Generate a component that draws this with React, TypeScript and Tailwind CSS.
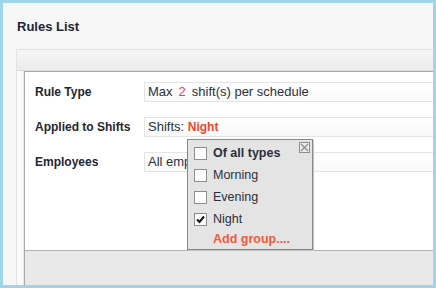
import React from 'react';

const shifts = [
  { label: 'Of all types', bold: true, checked: false },
  { label: 'Morning', bold: false, checked: false },
  { label: 'Evening', bold: false, checked: false },
  { label: 'Night', bold: false, checked: true },
];

const Field = ({ label, children }: { label: string; children: React.ReactNode }) => (
  <div className="flex items-center h-[20px] mb-[15px]">
    <div className="w-[109px] text-[12px] font-bold text-[#1f2633] leading-none">{label}</div>
    <div className="flex-1 h-[20px] flex items-center pl-[3px] border border-r-0 border-[#e4e4e4] bg-gradient-to-b from-white to-[#f9f9f9] text-[13px] text-[#2b303b] whitespace-nowrap overflow-hidden">
      {children}
    </div>
  </div>
);

const Checkbox = ({ checked }: { checked: boolean }) => (
  <div className="w-[13px] h-[13px] shrink-0 border border-[#8d8d8d] bg-white flex items-center justify-center">
    {checked && (
      <svg width="9" height="9" viewBox="0 0 9 9">
        <path d="M1 4.5 L3.5 7 L8 1.5" fill="none" stroke="#111" strokeWidth="2" />
      </svg>
    )}
  </div>
);

export default function App() {
  return (
    <div className="w-[436px] h-[288px] border-[3px] border-[#9fd5e8] bg-[#f6f6f6] flex flex-col overflow-hidden font-['Liberation_Sans',Arial,sans-serif]">
      <div className="pl-[14px] pt-[16px] h-[46px] text-[13px] leading-[16px] font-bold text-[#1e2735]">Rules List</div>

      <div className="ml-[13px] flex-1 flex flex-col border-l border-t border-[#e3e3e3]">
        {/* header strip */}
        <div className="h-[21px] bg-gradient-to-b from-[#f6f6f6] to-[#ececec] border-b border-[#dcdcdc]" />

        <div className="flex-1 flex">
          <div className="w-[7px] bg-[#fafafa] border-r border-[#e8e8e8]" />
          <div className="flex-1 flex flex-col border-l border-t border-[#a9a9a9] bg-white">
            <div className="relative h-[178px] pt-[10px] pl-[10px]">
              <Field label="Rule Type">
                <span>Max</span>
                <span className="pl-[6px] pr-[6px] text-[#f2452e]">2</span>
                <span>shift(s) per schedule</span>
              </Field>
              <Field label="Applied to Shifts">
                <span>Shifts:&nbsp;</span>
                <span className="text-[12px] font-bold text-[#f2452e]">Night</span>
              </Field>
              <Field label="Employees">
                <span>All employees</span>
              </Field>

              {/* shift picker popup */}
              <div className="absolute left-[162px] top-[67px] w-[126px] h-[111px] bg-[#e4e4e4] border border-[#888] shadow-[1px_1px_0_#c4c4c4] pt-[2px] pl-[6px]">
                <button className="absolute right-[2px] top-[2px] w-[11px] h-[11px] border border-[#8f8f8f] bg-[#ececec] flex items-center justify-center">
                  <svg width="9" height="9" viewBox="0 0 9 9">
                    <path d="M1 1 L8 8 M8 1 L1 8" stroke="#8a8a8a" strokeWidth="1.2" />
                  </svg>
                </button>
                {shifts.map((s) => (
                  <div key={s.label} className="flex items-center gap-[6px] h-[22px]">
                    <Checkbox checked={s.checked} />
                    <span className={`text-[12.5px] text-[#2b303b] ${s.bold ? 'font-bold' : ''}`}>{s.label}</span>
                  </div>
                ))}
                <div className="h-[18px] flex items-center pl-[19px] text-[12.5px] font-bold text-[#f25a3c]">Add group....</div>
              </div>
            </div>
            <div className="flex-1 border-t border-[#b3b3b3] bg-[#e9e9e9]" />
          </div>
        </div>
      </div>
    </div>
  );
}
